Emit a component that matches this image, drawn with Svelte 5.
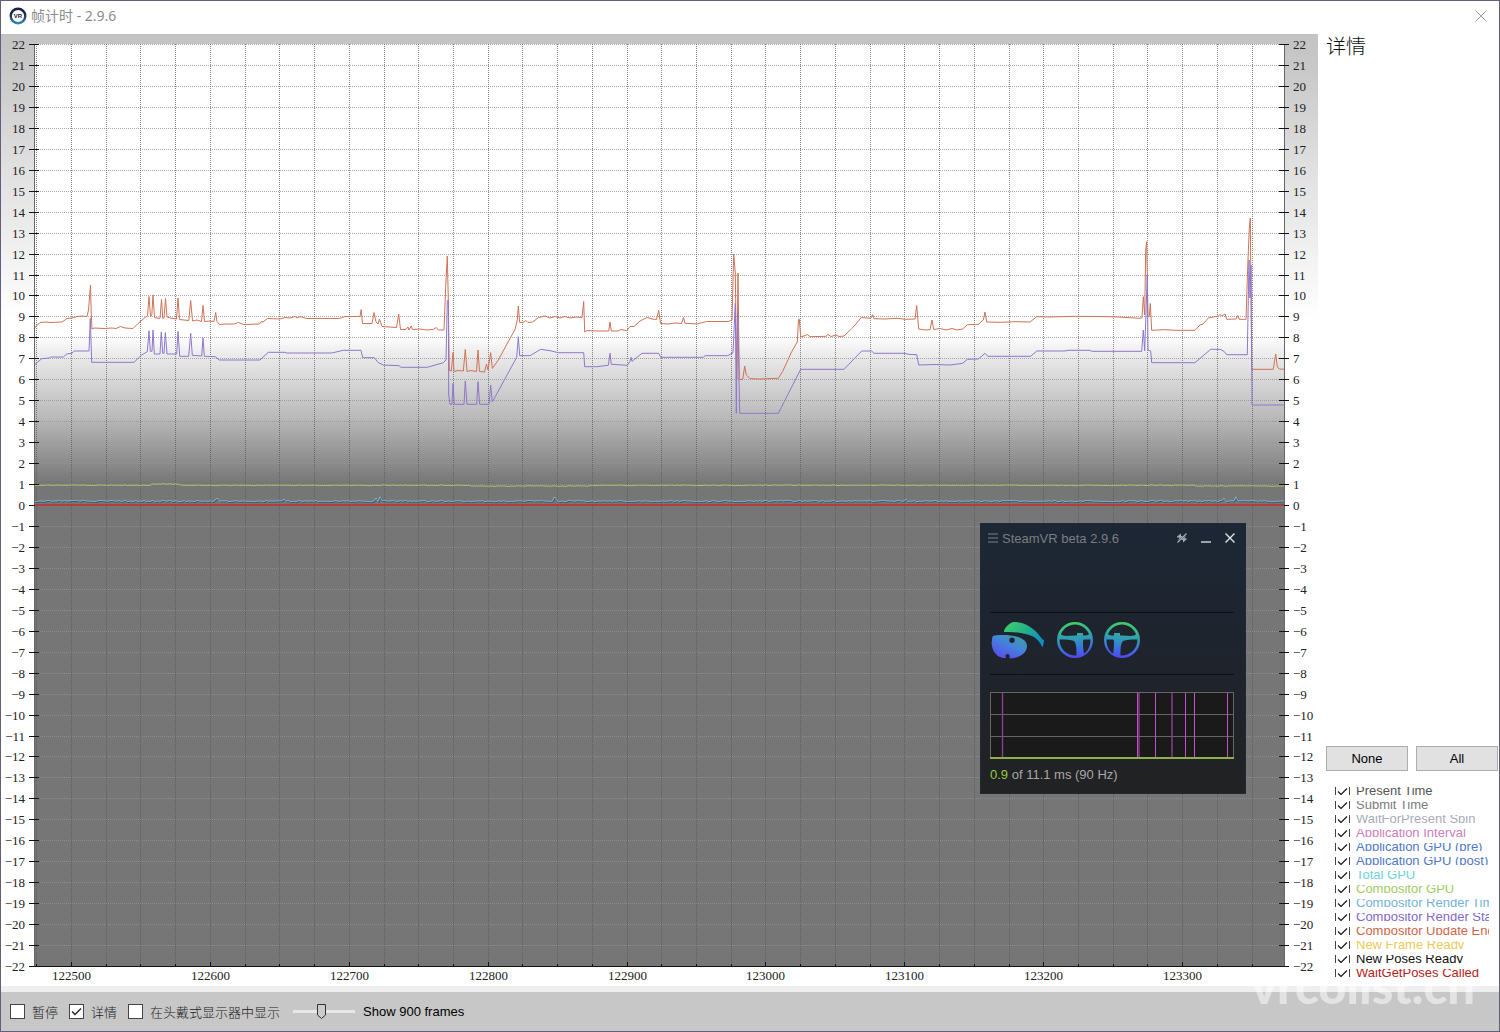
<script>
  const PLOT = { left: 34, right: 1284, top: 44, bottom: 966 };
  const FIRST_FRAME = 122473;
  const FRAMES = 900;

  const xOf = (frame) => Math.floor(PLOT.left + ((frame - FIRST_FRAME) * (PLOT.right - PLOT.left)) / FRAMES) + 0.5;
  const yOf = (ms) => Math.round(PLOT.top + ((22 - ms) * (PLOT.bottom - PLOT.top)) / 44) + 0.5;

  const msTicks = Array.from({ length: 45 }, (_, i) => 22 - i);
  const frameTicks = Array.from({ length: 36 }, (_, i) => 122475 + i * 25);
  const frameLabels = frameTicks.filter((f) => f % 100 === 0);

  const label = (ms) => (ms < 0 ? `−${-ms}` : `${ms}`);

  // small ripple for the nearly flat timing lines
  function ripple(base, amp, bumps) {
    const pts = [];
    for (let x = PLOT.left; x <= PLOT.right; x += 2) {
      const n = Math.sin(x * 12.9898) * 43758.5453;
      let y = base(x) + ((n - Math.floor(n)) - 0.5) * amp;
      for (const [bx, h] of bumps) {
        if (Math.abs(bx - x) < 2) y -= h;
      }
      pts.push(`${x},${y.toFixed(1)}`);
    }
    return pts.join(' ');
  }

  const updateEnd =
    '34,328.5 40,322.5 46,322 50,322.5 62,322 65,320 67,318.5 72,318 77,316.5 82,316 87,316.5 88.5,310 90.5,285 91.2,312 92,329 94,328 104,328.5 112,328 116,328.5 120.5,326.5 125,328 133,328.5 138,323.5 142,320 145,317.5 147.5,316 149,296.5 150.5,316.5 151.8,315 153,295 154.5,317.5 160,318.5 161.5,299.5 162.8,318.5 164,318 165.5,298.5 167,317 170,318 176.5,319 178,298 179.5,319.5 184,320 188.8,320.5 190.7,300.5 192.5,321 197,320 201.5,321.5 203,305.5 204.5,321.5 210,321 214,321.5 215.7,312.5 217,321.5 219.5,324.5 226,324 234,324 238.5,322.5 243.5,324.5 259.5,324 261,321.5 263,322 267.5,318.5 280,319 285,317.5 290,318 295,316.5 297,318 300,316.5 306.5,318.5 339.5,318.5 345,316.5 360,316.5 361.2,309.5 362.5,323.5 372,323.5 374,312.5 376,322 378,324 379.5,319 382,326.5 396.5,327.5 398.7,314 400.5,329.5 406,329.5 408,327 409,330 411.3,326 412.5,329.5 420,329 426,330 433,329.5 436.3,327.5 438.5,330 444,330 445.7,286.5 447.3,256 448.3,300 449.3,370.5 451.3,371 453,352.5 454,371.5 458,370.5 463.3,371 465.3,349.5 467,371.5 471,370.5 476.5,371.5 478,350 479.5,371.5 484.5,372 486.5,364 488,370 490.7,352.5 492.3,368.5 498.3,360 507,344 515,329.5 517.3,320 518.3,306 519.7,322.5 524,322 526,320.5 528,322.5 532.7,322 538.5,317.5 545,316 550,318 555,316.5 560,318 565,316.5 570,318 576,317 582,317.5 583.7,301.5 584.7,332 586.7,330.7 600,331 608.7,331 610,322 611.3,331 618,331 621,329.5 626.7,330.7 630,326.5 634,326.5 640,321 644,319 647.3,317.5 652,319 656.5,319.5 658.7,310.5 660.5,323.5 668,324 675,323 681.5,323.5 683.5,317.5 685,323.3 697,324 706.5,321.5 728.3,321.5 732,320 733.7,254 735.3,273 736.7,379.5 738,273 739.3,379.5 742.7,379.5 744.7,366 746.3,375 747.5,376 750,378.7 760,379 778.3,378.3 782.7,371.3 787,362 791.7,351.7 797.3,342 798.5,319.3 799.3,319.3 800.7,336.7 804,336 807.3,334.5 810,336.7 826,336.3 828,334.5 831,336.5 836,335 839,336.5 844,336 851.7,328.7 856,324 861.3,317.5 870.7,318.3 872.7,314.7 874,318.7 885,319 897,318.3 906,319.3 915,319 916.7,305.5 918.7,329 925,330 930,329.7 932,320 933.7,329.5 940,328.5 946,330 952,328.5 957,330 962.7,329 967.3,324.7 978.3,324.3 983.3,320 985,312 986.7,322 1000,322.3 1015,321.7 1030,322 1036.7,316.7 1050,317 1075,316.3 1100,316.5 1118,317 1140,318.3 1142,317.7 1143.3,296.7 1144.7,315 1145.7,250 1146.7,241.7 1148,316.7 1149.3,316.7 1150.3,303.5 1151.7,330.3 1165,329.7 1175,330.3 1195,330.3 1200,325 1203,324 1208.3,318 1218.3,316 1220,314.5 1222,316 1225,314 1226.7,319.3 1236,319 1237.7,315.7 1239.3,319.3 1246,319.3 1247.7,266.7 1249.3,228.3 1250.3,218 1251.7,369.3 1273.3,369.3 1275.7,354 1277.3,366.7 1279.3,369 1284,369.3';

  const renderStart =
    '34,365.3 41.7,358.7 49.3,358 50.7,357 63.3,357 66.7,354 71.7,353.3 74.3,351 89,351 90.3,318.3 91.7,362.3 134,362.3 141.7,355 147.3,351.7 149,330.7 150.3,351.3 152,351.3 153,330 154.3,354 160,354 161.3,332 162.7,353.3 164,353.3 165.3,332.7 167,354 176.7,354 178,331.3 179.7,356.3 188.7,356.3 190.7,333.3 192.3,355.3 201.7,356 203,337.7 204.3,356.3 215.3,356.7 219.3,360 260,360 268.3,352.3 285,352.3 286,353 331.7,353 343.3,350.3 361,350.3 362.7,357.7 374.3,357.7 378.3,362.7 383.3,365 399.3,365.7 400.7,367.3 427.3,367.3 443.3,362.7 446,360 447.3,300.7 448.3,300.7 448.7,395 450,404.3 452,404.3 453,383.3 454.3,404.3 464,404.3 465.3,381 467,404.3 476.7,404.3 478,381.7 479.7,404.3 489,404.3 490.7,385 492.3,402 516.7,357.3 518.3,336.7 519.7,355.7 530,355.7 540.7,349.3 550,350.7 558.3,352.7 583.7,352.7 584.7,366.7 596.7,366.7 608.3,365.3 610,353.3 611.3,364.3 627.3,365.3 630,361.3 631,357.3 632,361.3 642,353.3 658.7,353.3 660.7,357.3 703.3,357.3 705,355.7 727.7,355.7 733,352.7 735.3,303.3 736.3,413.3 737.7,311.7 739.7,413.3 778.3,413.3 800.7,369.3 844,369.3 861.7,351 871.7,351 874,353.3 905,353.3 908.3,354.3 916.7,354.7 918.7,365 935,364.5 950,365 962.7,363.3 967.3,359.3 978.3,359 985,353.3 987.7,356.3 1030.7,356.3 1036.7,351 1065,351 1068,350.3 1090,350.3 1091.7,351.3 1141.7,351.3 1143.3,330 1144.7,350.7 1147.3,275 1148,350 1150.7,351 1151.7,362.7 1195,362.7 1210.7,349.3 1220,349.3 1224,351.3 1226.7,354.7 1247.3,354.7 1249,260 1250,298 1251,265 1252,405 1284,405';

  const compositorGpu = ripple((x) => (x > 150 && x < 182 ? 484 : x > 470 && x < 590 ? 486 : x > 1195 ? 486 : 485.3), 0.8, []);
  const renderTime = ripple(() => 501, 1.4, [[217, 3], [284, 2], [376, 3], [380, 5], [555, 3], [906, 2], [1224, 3], [1236, 4]]);

  const legend = $state([
    { name: 'Present Time', color: '#555555', on: true },
    { name: 'Submit Time', color: '#7c7c7c', on: true },
    { name: 'WaitForPresent Spin', color: '#a9acb8', on: true },
    { name: 'Application Interval', color: '#d07cc0', on: true },
    { name: 'Application GPU (pre)', color: '#5078c8', on: true },
    { name: 'Application GPU (post)', color: '#5078c8', on: true },
    { name: 'Total GPU', color: '#6ed2da', on: true },
    { name: 'Compositor GPU', color: '#a2cc62', on: true },
    { name: 'Compositor Render Time', color: '#74b2dc', on: true },
    { name: 'Compositor Render Start', color: '#8466cc', on: true },
    { name: 'Compositor Update End', color: '#d0654a', on: true },
    { name: 'New Frame Ready', color: '#ecca58', on: true },
    { name: 'New Poses Ready', color: '#111111', on: true },
    { name: 'WaitGetPoses Called', color: '#b81c1c', on: true },
  ]);

  let paused = $state(false);
  let details = $state(true);
  let inHeadset = $state(false);
  let frames = $state(900);

  const setAll = (on) => legend.forEach((item) => (item.on = on));
</script>

<main class="window">
  <header class="titlebar">
    <svg class="logo" viewBox="0 0 18 18" aria-hidden="true">
      <defs>
        <linearGradient id="ring" x1="0" y1="0" x2="0" y2="1">
          <stop offset="0.3" stop-color="#1b2145" />
          <stop offset="1" stop-color="#2f86b0" />
        </linearGradient>
      </defs>
      <circle cx="9" cy="9" r="7.3" fill="#fff" stroke="url(#ring)" stroke-width="2.4" />
      <text x="9" y="11.2" text-anchor="middle" class="logo-text">VR</text>
    </svg>
    <h1>帧计时 - 2.9.6</h1>
    <button class="close" aria-label="Close">
      <svg viewBox="0 0 12 12"><path d="M.5 .5 11.5 11.5M11.5 .5 .5 11.5" /></svg>
    </button>
  </header>

  <div class="body">
    <svg class="chart" viewBox="1 34 1317 952" role="img" aria-label="Frame timing">
      <defs>
        <linearGradient id="back" x1="0" y1="0" x2="0" y2="1">
          <stop offset="0" stop-color="#c3c3c3" />
          <stop offset="0.04" stop-color="#c9c9c9" />
          <stop offset="0.14" stop-color="#e0e0e0" />
          <stop offset="0.2" stop-color="#ebebeb" />
          <stop offset="0.3" stop-color="#fff" />
        </linearGradient>
        <linearGradient id="plot" gradientUnits="userSpaceOnUse" x1="0" y1="336" x2="0" y2="484">
          <stop offset="0" stop-color="#fff" />
          <stop offset="0.12" stop-color="#ececec" />
          <stop offset="0.55" stop-color="#b9b9b9" />
          <stop offset="1" stop-color="#767676" />
        </linearGradient>
      </defs>
      <rect x="1" y="34" width="1317" height="952" fill="url(#back)" />
      <rect x="34" y="44" width="1250" height="922" fill="url(#plot)" />

      <g class="grid">
        {#each msTicks as ms}
          <line class="h" x1="34" x2="1284" y1={yOf(ms)} y2={yOf(ms)} />
        {/each}
        {#each frameTicks as f}
          <line class="v" x1={xOf(f)} x2={xOf(f)} y1="44" y2="966" />
        {/each}
      </g>

      <g class="series">
        <polyline points={renderTime} stroke="#3f5666" transform="translate(1 1)" />
        <polyline points={renderTime} stroke="#78b0cf" />
        <polyline points={compositorGpu} stroke="#a9c069" />
        <polyline points={updateEnd} stroke="#cf7357" />
        <polyline points={renderStart} stroke="#8d78cb" />
      </g>

      <g class="axis">
        <line class="side" x1="34.5" x2="34.5" y1="44" y2="966" />
        <line class="side" x1="1284.5" x2="1284.5" y1="44" y2="966" />
        <line x1="29" x2="1289" y1="966.5" y2="966.5" />
        {#each msTicks as ms}
          <line x1="29" x2="39" y1={yOf(ms)} y2={yOf(ms)} />
          <line x1="1279" x2="1289" y1={yOf(ms)} y2={yOf(ms)} />
        {/each}
        {#each frameTicks as f}
          <line x1={xOf(f)} x2={xOf(f)} y1={f % 100 === 0 ? 962 : 964} y2="966" />
        {/each}
      </g>
      <rect x="35" y="504" width="1249" height="2" fill="#b33c3c" />

      <g class="labels">
        {#each msTicks as ms}
          <text x="25" y={yOf(ms) + 4.5} text-anchor="end">{label(ms)}</text>
          <text x="1293" y={yOf(ms) + 4.5}>{label(ms)}</text>
        {/each}
        {#each frameLabels as f}
          <text x={xOf(f)} y="980" text-anchor="middle">{f}</text>
        {/each}
      </g>
    </svg>

    <aside class="details">
      <h2>详情</h2>
      <div class="filters">
        <div class="actions">
          <button onclick={() => setAll(false)}>None</button>
          <button onclick={() => setAll(true)}>All</button>
        </div>
        <div class="legend">
          {#each legend as item}
            <label style:color={item.color}>
              <input type="checkbox" bind:checked={item.on} />
              <span>{item.name}</span>
            </label>
          {/each}
        </div>
      </div>
    </aside>
  </div>

  <footer class="toolbar">
    <label><input type="checkbox" bind:checked={paused} />暂停</label>
    <label><input type="checkbox" bind:checked={details} />详情</label>
    <label><input type="checkbox" bind:checked={inHeadset} />在头戴式显示器中显示</label>
    <input id="frames" type="range" min="100" max="1900" bind:value={frames} />
    <label class="frames" for="frames">Show {frames} frames</label>
  </footer>

  <section class="steamvr">
    <header>
      <button aria-label="Menu">
        <svg width="10" height="10" viewBox="0 0 10 10"><path d="M0 1h10M0 5h10M0 9h10" stroke="#7b8086" /></svg>
      </button>
      <h3>SteamVR beta 2.9.6</h3>
      <button aria-label="Mirror">
        <svg width="10" height="10" viewBox="0 0 10 10">
          <path d="M0 3.5 4 .5V3H6L1 7.5 2.5 4.5H0ZM10 6 6 9.5V7H4L9 2.5 7.5 5.5H10Z" fill="#a6abb1" />
          <path d="M.5 9.5 9.5 .5" stroke="#a6abb1" stroke-width="1.3" />
        </svg>
      </button>
      <button aria-label="Minimize">
        <svg width="10" height="10" viewBox="0 0 10 10"><path d="M0 9h10" stroke="#d8dade" stroke-width="1.4" /></svg>
      </button>
      <button aria-label="Close SteamVR">
        <svg width="10" height="10" viewBox="0 0 10 10"><path d="M.5 .5 9.5 9.5M9.5 .5 .5 9.5" stroke="#e2e4e7" stroke-width="1.4" /></svg>
      </button>
    </header>
    <div class="devices">
      <svg width="54" height="38" viewBox="0 0 54 38" aria-label="Headset">
        <defs>
          <linearGradient id="hmd" gradientUnits="userSpaceOnUse" x1="24" y1="10" x2="10" y2="38">
            <stop offset="0" stop-color="#3f9f9c" />
            <stop offset="0.45" stop-color="#4384d8" />
            <stop offset="1" stop-color="#5b4cf0" />
          </linearGradient>
          <linearGradient id="strap" x1="0" y1="0" x2="1" y2="0.6">
            <stop offset="0" stop-color="#45cf68" />
            <stop offset="0.5" stop-color="#26b486" />
            <stop offset="1" stop-color="#0d8fc4" />
          </linearGradient>
        </defs>
        <path d="M13 10C14 6 19 1.500 23 1C32 .5 43 7 48 14C50 17 52 19 53 19L52.500 23C52 24.500 52 26 51 26C50 22 47 19 43 16C35 12 25 10.500 13 11Z" fill="url(#strap)" />
        <path fill-rule="evenodd" d="M2 15C6 13.500 19 13.500 27 16C33 18 36 21 36 25.500C36 32 28 37 19 37.500C18 37 19.500 35 18 33.500C15.500 32 13.500 34 15 37C10 37 6 35 5 33C2.500 31 1 27 .5 22C1.500 19 .5 17 2 15ZM21 16.500A2.700 2.700 0 1 0 21 21.900A2.700 2.700 0 1 0 21 16.500Z" fill="url(#hmd)" />
      </svg>
      {#each ['left', 'right'] as side}
        <svg class="wheel" class:flip={side === 'right'} width="36" height="38" viewBox="0 0 36 38" aria-label="Controller {side}">
          <defs>
            <linearGradient id="wheel-{side}" gradientUnits="userSpaceOnUse" x1="16" y1="1" x2="20" y2="37">
              <stop offset="0" stop-color="#45cf62" />
              <stop offset="0.4" stop-color="#2fa3ac" />
              <stop offset="0.7" stop-color="#3777dc" />
              <stop offset="1" stop-color="#5146f2" />
            </linearGradient>
          </defs>
          <path
            fill-rule="evenodd"
            d="M18 1A18 18 0 1 1 18 37A18 18 0 1 1 18 1ZM4 13C7 7 12 3.500 18 3.500C24 3.500 29 7 32 13C31.500 14.500 29 14.500 26 14.500V12H20V14.500C14 14.500 5 16 4 13ZM2.500 18.500C9 18.500 14 18.500 17 20C19.500 23 19.500 28 19.500 34.500C10 35 2.500 28 2.500 18.500ZM28 18.500H33.500C33.500 25 31 30 27 32.500C26 28 26 23 26 20.500C26 19 27 18.500 28 18.500Z"
            fill="url(#wheel-{side})"
          />
        </svg>
      {/each}
    </div>
    <svg class="frame-graph" viewBox="0 0 244 68" aria-label="Frame times">
      <rect x="0.5" y="0.5" width="243" height="66" fill="#1a1a1a" stroke="#666" />
      <path d="M1 22.500H243M1 44.500H243" stroke="#666" />
      <path d="M147.500 1V66M165.500 1V66M195.500 1V66M204.500 1V66M237.500 1V66" stroke="#c44fcb" />
      <path d="M12.500 1V66M149 1V66M182 1V66" stroke="#8d3c92" stroke-width="1.4" />
      <path d="M0 66H244" stroke="#8fb14b" stroke-width="2" />
    </svg>
    <p><em>0.9</em> of 11.1 ms (90 Hz)</p>
  </section>

  <div class="watermark">vrcolist.cn</div>
</main>

<style>
  :global(body) {
    background: #fff;
    font-family: "Liberation Sans", "Noto Sans CJK SC", sans-serif;
    font-size: 13px;
  }
  h1, h2, h3, p {
    margin: 0;
    font-weight: 400;
  }
  button {
    font: inherit;
  }
  .window {
    position: relative;
    box-sizing: border-box;
    min-height: 100vh;
    display: flex;
    flex-direction: column;
    border: 1px solid #625f78;
    background: #fff;
    overflow: hidden;
  }
  .titlebar {
    box-sizing: border-box;
    display: flex;
    align-items: center;
    height: 33px;
    padding: 0 12px 3px 8px;
  }
  .logo {
    width: 18px;
    height: 18px;
    margin-right: 4px;
  }
  .logo-text {
    font-size: 6px;
    font-weight: 700;
    fill: #1b2145;
  }
  .titlebar h1 {
    flex: 1;
    font-family: "Noto Sans", "Noto Sans CJK SC", sans-serif;
    font-size: 14px;
    line-height: 18px;
    color: #8c8c8c;
  }
  .close {
    display: flex;
    padding: 0;
    border: 0;
    background: none;
  }
  .close svg {
    width: 12px;
    height: 12px;
    stroke: #999;
    fill: none;
  }
  .body {
    display: grid;
    grid-template-columns: minmax(0, 1fr) 181px;
  }
  .chart {
    display: block;
    width: 100%;
  }
  .grid line {
    stroke-dasharray: 1 1;
    shape-rendering: crispEdges;
  }
  .grid .h {
    stroke: #949494;
    opacity: 0.8;
  }
  .grid .v {
    stroke: #555;
    opacity: 0.7;
  }
  .series {
    fill: none;
    stroke-width: 1;
  }
  .axis line {
    stroke: #111;
    shape-rendering: crispEdges;
  }
  .axis .side {
    stroke: #666;
  }
  .labels {
    font-family: "Liberation Serif", serif;
    font-size: 13px;
    fill: #222;
  }
  .details {
    position: relative;
    z-index: 1;
    display: flex;
    flex-direction: column;
    justify-content: space-between;
    padding: 0 1px 9px 8px;
  }
  .details h2 {
    font-size: 20px;
    font-weight: 300;
    line-height: 26px;
    color: #111;
  }
  .actions {
    display: grid;
    grid-template-columns: 1fr 1fr;
    gap: 8px;
    margin-bottom: 16px;
  }
  .actions button {
    height: 25px;
    padding: 0;
    border: 1px solid #adadad;
    background: #e1e1e1;
    color: #000;
  }
  .legend {
    display: grid;
    gap: 6px;
    padding: 0 9px;
  }
  .legend label {
    display: flex;
    align-items: center;
    gap: 6px;
    height: 8px;
    overflow: hidden;
    white-space: nowrap;
  }
  .legend span {
    line-height: 8px;
  }
  input[type='checkbox'] {
    appearance: none;
    flex: none;
    width: 15px;
    height: 15px;
    margin: 0;
    border: 1px solid #444;
    background: #fff;
  }
  input[type='checkbox']:checked {
    background: #fff url("data:image/svg+xml,%3Csvg xmlns='http://www.w3.org/2000/svg' viewBox='0 0 13 13'%3E%3Cpath d='M2 6.500 5 9.500 11 3.500' fill='none' stroke='%23222' stroke-width='1.300'/%3E%3C/svg%3E");
  }
  .toolbar {
    display: flex;
    align-items: center;
    height: 39px;
    padding-left: 9px;
    border-top: 6px solid #efefef;
    background: #c7c7c7;
    color: #222;
  }
  .toolbar label {
    display: flex;
    align-items: center;
    gap: 7px;
    margin-right: 11px;
    font-weight: 300;
  }
  .toolbar .frames {
    font-weight: 400;
    color: #000;
  }
  .toolbar input[type='range'] {
    appearance: none;
    width: 62px;
    height: 15px;
    margin: 0 8px 0 2px;
    background: linear-gradient(#e8e8e8, #e8e8e8) center / 100% 3px no-repeat;
  }
  .toolbar input[type='range']::-webkit-slider-thumb {
    appearance: none;
    width: 9px;
    height: 15px;
    background: url("data:image/svg+xml,%3Csvg xmlns='http://www.w3.org/2000/svg' viewBox='0 0 9 15'%3E%3Cpath d='M.5 .5H8.500V11L4.500 14.500 .5 11Z' fill='%23ccc' stroke='%23333'/%3E%3C/svg%3E");
  }
  .steamvr {
    position: absolute;
    right: 253px;
    bottom: 237px;
    box-sizing: border-box;
    width: 266px;
    height: 271px;
    padding: 0 11px 0 9px;
    border: 1px solid #1c2a38;
    background: linear-gradient(#1d2735, #1f232b 60%, #222223);
  }
  .steamvr header {
    display: flex;
    align-items: center;
    height: 28px;
    margin: 0 -1px 60px -2px;
  }
  .steamvr header button {
    display: flex;
    padding: 0;
    border: 0;
    background: none;
    margin-left: 14px;
  }
  .steamvr header button:first-child {
    margin: 0 4px 0 0;
  }
  .steamvr h3 {
    flex: 1;
    font-size: 13px;
    color: #7b7d80;
  }
  .devices {
    display: flex;
    gap: 12px;
    height: 53px;
    padding: 8px 0 0 1px;
    border-top: 1px solid #0d1014;
    border-bottom: 1px solid #0d1014;
  }
  .wheel + .wheel {
    margin-left: -1px;
  }
  .wheel.flip {
    transform: scaleX(-1);
  }
  .frame-graph {
    display: block;
    width: 100%;
    margin: 17px 0 7px;
  }
  .steamvr p {
    line-height: 16px;
    color: #a8a8a8;
  }
  .steamvr em {
    font-style: normal;
    color: #98c93c;
  }
  .watermark {
    position: absolute;
    right: 24px;
    bottom: 17px;
    font-family: Lato, sans-serif;
    font-size: 49px;
    font-weight: 900;
    line-height: 58px;
    color: #fff;
    opacity: 0.5;
    pointer-events: none;
  }
</style>
